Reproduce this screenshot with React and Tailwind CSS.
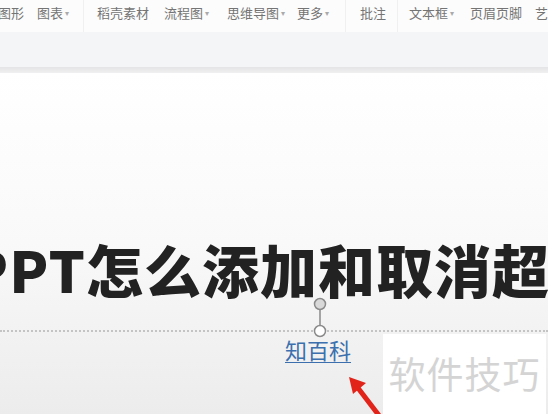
import React from "react";

const cjk = { fontFamily: '"Noto Sans CJK SC", "Noto Sans", sans-serif' };

function Item({ label, caret, ml }) {
  return (
    <div className={`flex items-center whitespace-nowrap ${ml}`}>
      <span>{label}</span>
      {caret && <span className="ml-[2px] text-[8px] text-[#aaa]">▾</span>}
    </div>
  );
}

export default function App() {
  return (
    <div
      className="relative w-[548px] h-[414px] overflow-hidden bg-white"
      style={cjk}
    >
      {/* toolbar */}
      <div className="h-[32px] bg-[#fcfcfc] flex items-start text-[13px] text-[#747474] pt-[3px]">
        <Item label="图形" ml="ml-[-2px]" />
        <Item label="图表" caret ml="ml-[13px]" />
        <div className="ml-[14px] mt-[-3px] w-px h-[32px] bg-[#f0f0f0]" />
        <Item label="稻壳素材" ml="ml-[13px]" />
        <Item label="流程图" caret ml="ml-[15px]" />
        <Item label="思维导图" caret ml="ml-[18px]" />
        <Item label="更多" caret ml="ml-[12px]" />
        <div className="ml-[16px] mt-[-3px] w-px h-[32px] bg-[#f0f0f0]" />
        <Item label="批注" ml="ml-[14px]" />
        <div className="ml-[11px] mt-[-3px] w-px h-[32px] bg-[#f0f0f0]" />
        <Item label="文本框" caret ml="ml-[11px]" />
        <Item label="页眉页脚" ml="ml-[16px]" />
        <Item label="艺" ml="ml-[13px]" />
      </div>
      {/* gray band */}
      <div className="h-[35px] bg-[#f4f5f7]" />
      <div className="h-[6px] bg-gradient-to-b from-[#e4e4e6] to-[#f0f0f1]" />
      {/* slide */}
      <div className="relative h-[341px] bg-gradient-to-b from-[#ffffff] via-[#f9f9f9] to-[#ececec]">
        <div
          className="absolute left-[-31px] top-[167px] flex items-end whitespace-nowrap text-[57px] font-black leading-none text-[#222]"
          style={{ fontFamily: '"Noto Sans CJK SC", sans-serif', letterSpacing: "1px" }}
        >
          PPT怎么添加和取消超
        </div>
        {/* dotted frame line */}
        <div className="absolute left-0 right-0 top-[257px] border-t-2 border-dotted border-[#c4c4c4]" />
        {/* watermark box */}
        <div className="absolute left-[383px] top-[261px] w-[163px] h-[90px] bg-white flex justify-center pt-[21px]">
          <span className="text-[37px] leading-none text-[#d4d4d4] tracking-[1px]">软件技巧</span>
        </div>
        {/* link text */}
        <div className="absolute left-[285px] top-[265px] text-[22px] leading-none text-[#3b6fae] underline underline-offset-[3px] decoration-[1px]">
          知百科
        </div>
        {/* handles */}
        <svg className="absolute left-[310px] top-[221px]" width="20" height="46" viewBox="0 0 20 46">
          <line x1="10" y1="16" x2="10" y2="31" stroke="#8a8a8a" strokeWidth="1.5" />
          <circle cx="10" cy="10" r="5.5" fill="#d8d8d8" stroke="#8a8a8a" strokeWidth="1.5" />
          <circle cx="10" cy="37" r="5.5" fill="#fff" stroke="#8a8a8a" strokeWidth="1.5" />
        </svg>
        {/* red arrow */}
        <svg className="absolute left-[340px] top-[299px]" width="60" height="50" viewBox="0 0 60 50">
          <line x1="44" y1="50" x2="18" y2="16" stroke="#e2231a" strokeWidth="5" />
          <polygon points="9,5 26,11 13,22" fill="#e2231a" />
        </svg>
      </div>
    </div>
  );
}
